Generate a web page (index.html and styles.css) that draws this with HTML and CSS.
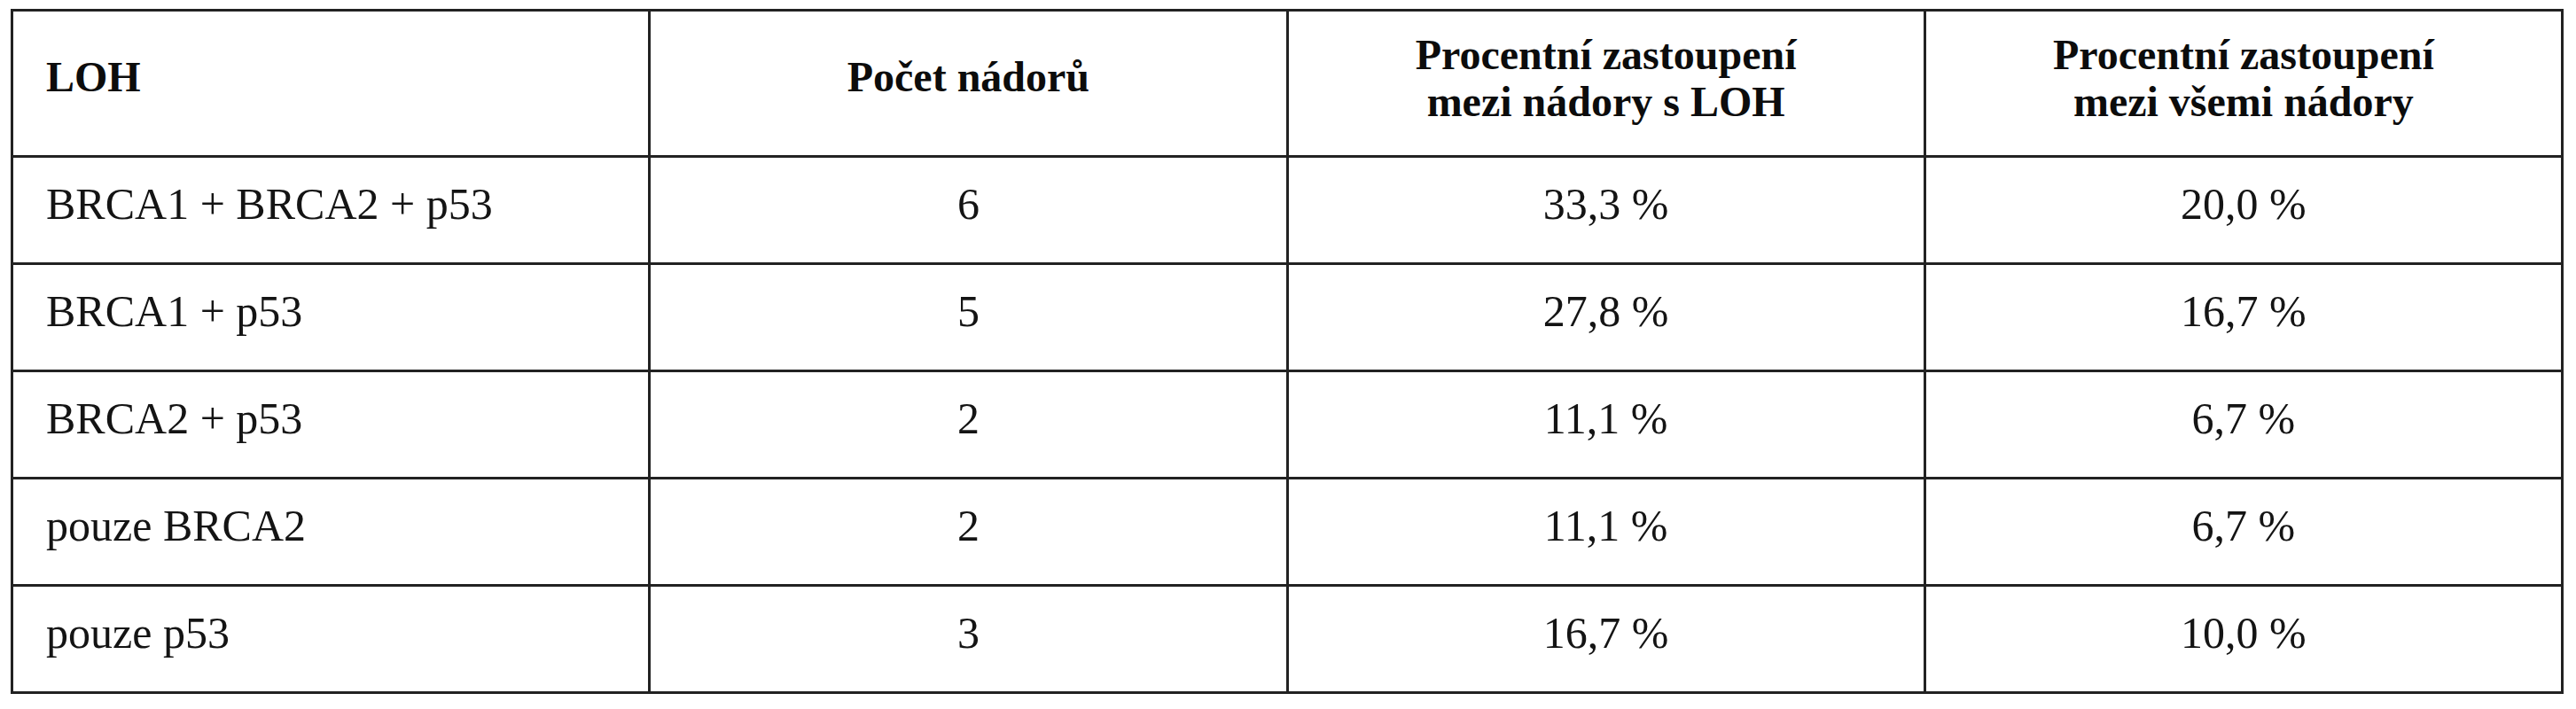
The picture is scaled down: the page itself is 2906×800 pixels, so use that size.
FILE: index.html
```html
<!DOCTYPE html>
<html lang="cs">
<head>
<meta charset="utf-8">
<title>LOH</title>
<link rel="stylesheet" href="styles.css">
</head>
<body>
<div class="page">
  <table class="loh-table">
    <colgroup>
      <col class="c1"><col class="c2"><col class="c3"><col class="c4">
    </colgroup>
    <thead>
      <tr class="head-row">
        <th class="left single">LOH</th>
        <th class="single">Počet nádorů</th>
        <th>Procentní zastoupení<br>mezi nádory s LOH</th>
        <th>Procentní zastoupení<br>mezi všemi nádory</th>
      </tr>
    </thead>
    <tbody>
      <tr>
        <td class="left">BRCA1 + BRCA2 + p53</td>
        <td>6</td>
        <td>33,3 %</td>
        <td>20,0 %</td>
      </tr>
      <tr>
        <td class="left">BRCA1 + p53</td>
        <td>5</td>
        <td>27,8 %</td>
        <td>16,7 %</td>
      </tr>
      <tr>
        <td class="left">BRCA2 + p53</td>
        <td>2</td>
        <td>11,1 %</td>
        <td>6,7 %</td>
      </tr>
      <tr>
        <td class="left">pouze BRCA2</td>
        <td>2</td>
        <td>11,1 %</td>
        <td>6,7 %</td>
      </tr>
      <tr>
        <td class="left">pouze p53</td>
        <td>3</td>
        <td>16,7 %</td>
        <td>10,0 %</td>
      </tr>
    </tbody>
  </table>
</div>
</body>
</html>
```

FILE: styles.css
```css
html, body {
  margin: 0;
  padding: 0;
  background: #ffffff;
}

.page {
  padding: 10px 0 0 12px;
}

.loh-table {
  width: 2880px;
  table-layout: fixed;
  border-collapse: collapse;
  border: 3px solid #222222;
  font-family: "Liberation Serif", "Times New Roman", serif;
  line-height: 53px;
  color: #141414;
}

.loh-table col {
  width: 25%;
}

.loh-table th,
.loh-table td {
  border: 3px solid #222222;
  text-align: center;
  vertical-align: middle;
}

.loh-table th {
  font-size: 48px;
  font-weight: bold;
  color: #0c0c0c;
  height: 149px;
  padding: 0 0 13px 0;
}

.loh-table th.single {
  height: 146px;
  padding-bottom: 16px;
}

.loh-table td {
  font-size: 50px;
  font-weight: normal;
  height: 104px;
  padding: 0 0 14px 0;
}

.loh-table .left {
  text-align: left;
  padding-left: 37px;
}
```
